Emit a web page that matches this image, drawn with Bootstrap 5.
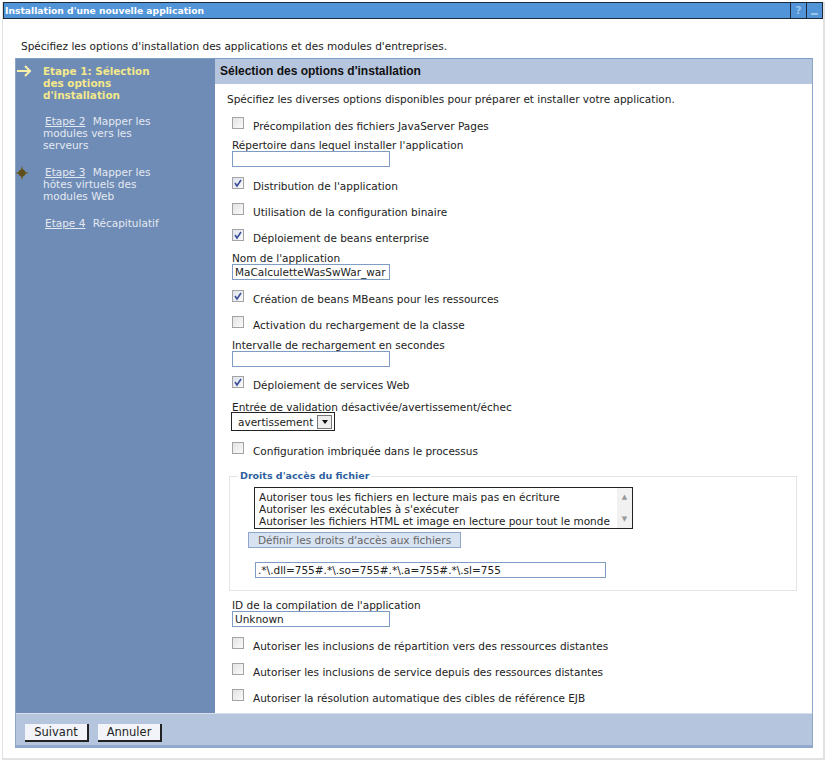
<!DOCTYPE html>
<html lang="fr">
<head>
  <meta charset="UTF-8">
  <meta name="viewport" content="width=device-width, initial-scale=1.0">
  <title>Installation d'une nouvelle application</title>
  <link href="https://cdn.jsdelivr.net/npm/bootstrap@5.3.0/dist/css/bootstrap.min.css" rel="stylesheet">
  <style>
    body { background: #fff; font-family: "DejaVu Sans", sans-serif; font-size: 10.5px; line-height: 12px; color: #222; }
    .outer { width: 823px; height: 758px; margin: 2px 0 0 2px; border-right: 2px solid #e2e2e2; border-bottom: 2px solid #e2e2e2; border-left: 1px solid #e2e2e2; }
    .titlebar { height: 17px; background: #5294d8; border: 1px solid #1c2a3a; color: #fff; font-weight: 700; font-size: 9.2px; line-height: 16px; padding-left: 1px; }
    .titlebar .tb-btn { width: 16px; height: 15px; border-left: 1px solid #1c2a3a; color: #9cc4ea; text-align: center; font-weight: 700; font-size: 11px; }
    .titlebar .tb-min { position: relative; }
    .titlebar .tb-min::after { content: ""; position: absolute; left: 4px; bottom: 3px; width: 7px; height: 2px; background: #9cc4ea; }
    .intro { height: 39px; padding: 21px 0 0 18px; }
    .wizard { width: 798px; margin-left: 12px; height: 690px; border: 1px solid #8ea6c9; border-top-color: #7f9cc4; }
    .side { width: 199px; background: #6f8cb6; color: #e4e9f1; position: relative; padding: 6px 8px 0 27px; flex: none; }
    .side a { color: #e4e9f1; margin: 0 4px 0 2px; }
    .step-current { color: #f4e88a; font-weight: 700; font-size: 10.4px; margin-bottom: 14px; }
    .step { margin-bottom: 15px; }
    .step-icon { position: absolute; left: 0; }
    .step-star { left: -2px; margin-top: -1px; }
    .main-col { flex: 1; min-width: 0; }
    .main-head { background: #b5c5de; height: 25px; font-family: "Liberation Sans", sans-serif; font-weight: 700; font-size: 12px; line-height: 25px; color: #111; padding-left: 5px; }
    .main-body { padding: 9px 0 0 13px; }
    .desc { height: 20px; margin-left: -1px; }
    .opt { height: 26px; display: flex; align-items: center; padding-left: 4px; }
    .opt input { appearance: none; width: 12px; height: 12px; border: 1px solid #a3a3a3; background: linear-gradient(135deg, #e3e3e3, #fafafa); margin: -6px 9px 0 0; flex: none; }
    .opt input:checked { background: no-repeat center/10px url("data:image/svg+xml,%3Csvg xmlns='http://www.w3.org/2000/svg' viewBox='0 0 10 10'%3E%3Cpath d='M2 5l2 3 4-6' fill='none' stroke='%233b4f9a' stroke-width='1.6'/%3E%3C/svg%3E"), linear-gradient(135deg, #dfe3ec, #fafafa); }
    .fld { padding-left: 4px; margin-bottom: 6px; }
    .fld label { display: block; height: 12px; line-height: 12px; margin: 0; }
    .fld-nom { padding-top: 1px; }
    .fld-int { padding-top: 1px; margin-bottom: 5px; }
    .fld-val { padding-top: 3px; margin-bottom: 7px; }
    .fld-val label { height: 11px; }
    .txt { display: block; width: 158px; height: 16px; border: 1px solid #7f9cc4; padding: 0 2px; font-size: 10.5px; line-height: 16px; color: #222; background: #fff; }
    .sel { display: inline-flex; align-items: center; height: 19px; width: 104px; margin-left: -1px; border: 1px solid #222; padding-left: 6px; justify-content: space-between; }
    .sel i { width: 15px; height: 14px; margin-right: 2px; border: 1px solid #777; background: #eee; display: flex; align-items: center; justify-content: center; }
    .sel i::after { content: ""; border: 3px solid transparent; border-top: 4px solid #111; margin-top: 4px; }
    .perm { position: relative; width: 568px; height: 115px; margin: 12px 0 8px 1px; border: 1px solid #e4e4e4; padding: 10px 0 0 24px; }
    .perm-title { position: absolute; left: 8px; top: -7px; background: #fff; padding: 0 2px; color: #2f5f9e; font-weight: 700; font-size: 9.5px; }
    .listbox { width: 379px; height: 42px; border: 1px solid #222; display: flex; padding: 3px 0 0 4px; }
    .listbox .items { flex: 1; }
    .listbox .sb { width: 15px; margin-top: -3px; background: #f1f1f1; color: #999; font-size: 7px; display: flex; flex-direction: column; justify-content: space-between; align-items: center; padding: 3px 0; }
    .perm-btn { display: block; width: 213px; height: 16px; margin: 3px 0 0 -6px; padding: 0; background: #d8e3f2; border: 1px solid #8ea6c9; color: #666; font-size: 10.5px; line-height: 13px; }
    .perm .txt { width: 351px; margin: 14px 0 0 1px; }
    .foot { height: 34px; background: #b5c5de; border-top: 1px solid #d8dfe9; border-bottom: 2px solid #93a9cc; padding: 9px 0 0 9px; }
    .foot .btn { --bs-btn-padding-y: 0; --bs-btn-padding-x: 0; --bs-btn-font-size: 11.5px; --bs-btn-border-radius: 0; --bs-btn-line-height: 15px; width: 64px; height: 18px; margin-top: 1px; background: #f2f4f9; color: #222; font-family: inherit; border: 0; border-right: 2px solid #222; border-bottom: 2px solid #222; }
    .foot .btn + .btn { margin-left: 1px; }
  </style>
</head>
<body>
  <div class="outer d-flex flex-column">
    <div class="titlebar d-flex justify-content-between">
      <span>Installation d'une nouvelle application</span>
      <div class="d-flex"><div class="tb-btn">?</div><div class="tb-btn tb-min"></div></div>
    </div>
    <div class="intro">Spécifiez les options d'installation des applications et des modules d'entreprises.</div>
    <div class="wizard d-flex flex-column">
      <div class="d-flex flex-grow-1">
        <div class="side">
          <svg class="step-icon" width="16" height="12" viewBox="0 0 16 12"><path d="M1 6h13M9 1l5 5-5 5" fill="none" stroke="#f8f0a8" stroke-width="2"/></svg>
          <div class="step-current">Etape 1: Sélection<br>des options<br>d'installation</div>
          <div class="step"><a href="#">Etape 2</a> Mapper les<br>modules vers les<br>serveurs</div>
          <svg class="step-icon step-star" width="16" height="16" viewBox="0 0 16 16"><path d="M8 1l1.6 5.4L15 8l-5.4 1.6L8 15l-1.6-5.4L1 8l5.4-1.6z" fill="#6e5c1c"/><circle cx="8" cy="8" r="3.4" fill="#5e4f1a"/></svg>
          <div class="step"><a href="#">Etape 3</a> Mapper les<br>hôtes virtuels des<br>modules Web</div>
          <div class="step"><a href="#">Etape 4</a> Récapitulatif</div>
        </div>
        <div class="main-col">
          <div class="main-head">Sélection des options d'installation</div>
          <div class="main-body">
            <div class="desc">Spécifiez les diverses options disponibles pour préparer et installer votre application.</div>
            <div class="opt"><input type="checkbox" id="o1"><label for="o1">Précompilation des fichiers JavaServer Pages</label></div>
            <div class="fld"><label>Répertoire dans lequel installer l'application</label><input class="txt" type="text"></div>
            <div class="opt"><input type="checkbox" id="o2" checked><label for="o2">Distribution de l'application</label></div>
            <div class="opt"><input type="checkbox" id="o3"><label for="o3">Utilisation de la configuration binaire</label></div>
            <div class="opt"><input type="checkbox" id="o4" checked><label for="o4">Déploiement de beans enterprise</label></div>
            <div class="fld fld-nom"><label>Nom de l'application</label><input class="txt" type="text" value="MaCalculetteWasSwWar_war"></div>
            <div class="opt"><input type="checkbox" id="o5" checked><label for="o5">Création de beans MBeans pour les ressources</label></div>
            <div class="opt"><input type="checkbox" id="o6"><label for="o6">Activation du rechargement de la classe</label></div>
            <div class="fld fld-int"><label>Intervalle de rechargement en secondes</label><input class="txt" type="text"></div>
            <div class="opt"><input type="checkbox" id="o7" checked><label for="o7">Déploiement de services Web</label></div>
            <div class="fld fld-val"><label>Entrée de validation désactivée/avertissement/échec</label><div class="sel">avertissement<i></i></div></div>
            <div class="opt"><input type="checkbox" id="o8"><label for="o8">Configuration imbriquée dans le processus</label></div>
            <div class="perm">
              <div class="perm-title">Droits d'accès du fichier</div>
              <div class="listbox">
                <div class="items">Autoriser tous les fichiers en lecture mais pas en écriture<br>Autoriser les exécutables à s'exécuter<br>Autoriser les fichiers HTML et image en lecture pour tout le monde</div>
                <div class="sb"><span>▲</span><span>▼</span></div>
              </div>
              <button type="button" class="perm-btn">Définir les droits d'accès aux fichiers</button>
              <input class="txt" type="text" value=".*\.dll=755#.*\.so=755#.*\.a=755#.*\.sl=755">
            </div>
            <div class="fld"><label>ID de la compilation de l'application</label><input class="txt" type="text" value="Unknown"></div>
            <div class="opt"><input type="checkbox" id="o9"><label for="o9">Autoriser les inclusions de répartition vers des ressources distantes</label></div>
            <div class="opt"><input type="checkbox" id="o10"><label for="o10">Autoriser les inclusions de service depuis des ressources distantes</label></div>
            <div class="opt"><input type="checkbox" id="o11"><label for="o11">Autoriser la résolution automatique des cibles de référence EJB</label></div>
          </div>
        </div>
      </div>
      <div class="foot d-flex gap-2">
        <button type="button" class="btn">Suivant</button>
        <button type="button" class="btn">Annuler</button>
      </div>
    </div>
  </div>
  <script src="https://cdn.jsdelivr.net/npm/bootstrap@5.3.0/dist/js/bootstrap.bundle.min.js"></script>
</body>
</html>
